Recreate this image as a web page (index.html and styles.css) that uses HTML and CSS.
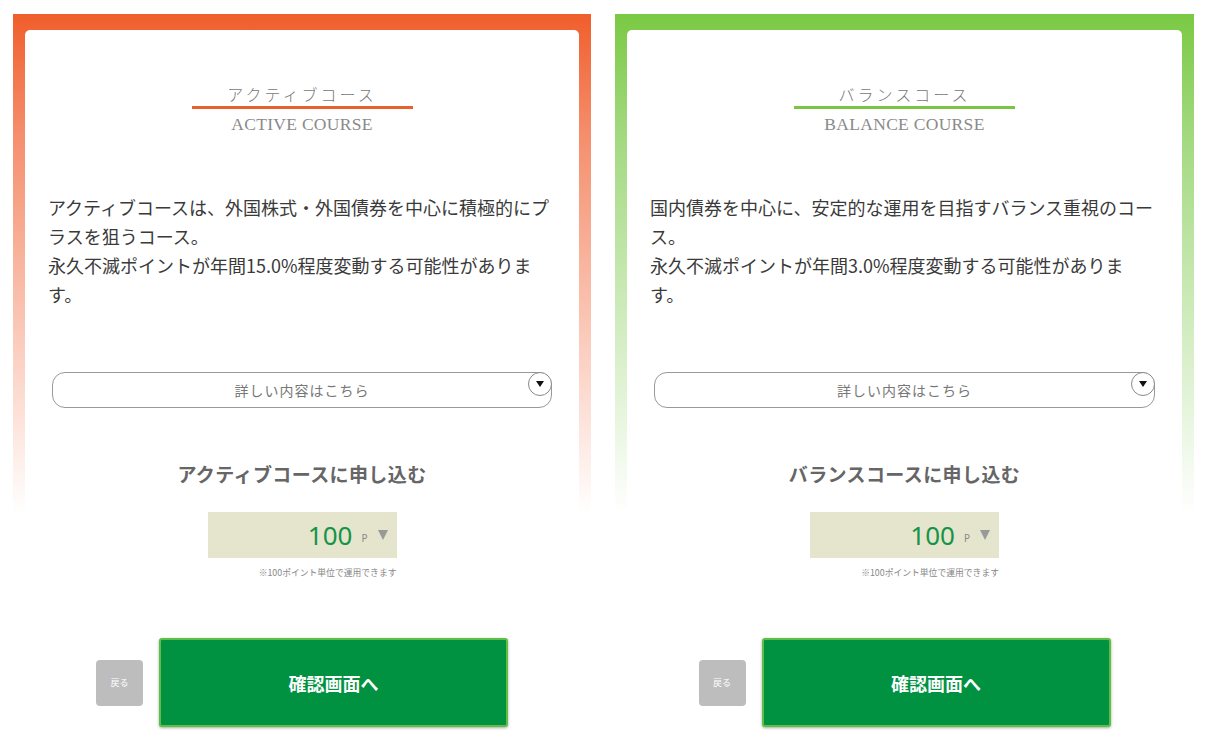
FILE: index.html
```html
<!DOCTYPE html>
<html lang="ja">
<head>
<meta charset="utf-8">
<title>コース選択</title>
<link rel="stylesheet" href="styles.css">
</head>
<body>
<div class="cards">
  <section class="card card-active">
    <div class="panel">
      <div class="title">
        <h2 class="title-ja">アクティブコース</h2>
        <p class="title-en">ACTIVE COURSE</p>
      </div>
      <p class="desc">アクティブコースは、外国株式・外国債券を中心に積極的にプラスを狙うコース。<br>永久不滅ポイントが年間15.0%程度変動する可能性があります。</p>
      <div class="details">詳しい内容はこちら<span class="details-icon"></span></div>
      <h3 class="apply">アクティブコースに申し込む</h3>
      <div class="amount-wrap">
        <div class="amount"><span class="amount-num">100</span><span class="amount-unit">P</span><span class="amount-arrow"></span></div>
        <p class="note">※100ポイント単位で運用できます</p>
      </div>
      <div class="actions">
        <button class="btn-back">戻る</button>
        <button class="btn-confirm">確認画面へ</button>
      </div>
    </div>
  </section>
  <section class="card card-balance">
    <div class="panel">
      <div class="title">
        <h2 class="title-ja">バランスコース</h2>
        <p class="title-en">BALANCE COURSE</p>
      </div>
      <p class="desc">国内債券を中心に、安定的な運用を目指すバランス重視のコース。<br>永久不滅ポイントが年間3.0%程度変動する可能性がありま<br>す。</p>
      <div class="details">詳しい内容はこちら<span class="details-icon"></span></div>
      <h3 class="apply">バランスコースに申し込む</h3>
      <div class="amount-wrap">
        <div class="amount"><span class="amount-num">100</span><span class="amount-unit">P</span><span class="amount-arrow"></span></div>
        <p class="note">※100ポイント単位で運用できます</p>
      </div>
      <div class="actions">
        <button class="btn-back">戻る</button>
        <button class="btn-confirm">確認画面へ</button>
      </div>
    </div>
  </section>
</div>
</body>
</html>
```
FILE: styles.css
```css
html, body {
  margin: 0;
  padding: 0;
  background: #fff;
  width: 1205px;
  height: 740px;
  overflow: hidden;
  font-family: "Noto Sans CJK JP", "Noto Sans", sans-serif;
}

.cards {
  display: flex;
  gap: 24px;
  padding: 14px 0 0 13px;
}

.card {
  width: 578px;
  height: 740px;
  padding: 16px 12px 0;
  box-sizing: border-box;
}

.card-active {
  background: linear-gradient(to bottom, #F05E2C 0px, #F58E6C 120px, rgba(255,255,255,0) 500px);
}

.card-balance {
  width: 579px;
  background: linear-gradient(to bottom, #7AC943 0px, #A2D97F 120px, rgba(255,255,255,0) 500px);
}

.panel {
  background: #fff;
  height: 100%;
  border-radius: 5px 5px 0 0;
  padding: 54px 23px 0;
  box-sizing: border-box;
  display: flex;
  flex-direction: column;
  align-items: center;
}

.title {
  display: flex;
  flex-direction: column;
  align-items: center;
}

.title-ja {
  margin: 0;
  width: 221px;
  text-align: center;
  font-weight: 300;
  font-size: 16px;
  line-height: 20px;
  letter-spacing: 3px;
  color: #777;
  padding-bottom: 2px;
  border-bottom: 3px solid #E8602C;
}

.card-balance .title-ja {
  border-bottom-color: #7DC443;
}

.title-en {
  margin: 5px 0 0;
  font-family: "Liberation Serif", serif;
  font-size: 17.5px;
  line-height: 20px;
  color: #8a8a8a;
  letter-spacing: 0.3px;
}

.desc {
  align-self: stretch;
  margin: 59px 0 0;
  font-size: 18px;
  line-height: 29px;
  color: #3a3a3a;
}

.details {
  position: relative;
  align-self: stretch;
  margin: 63px 4px 0 4px;
  height: 36px;
  border: 1px solid #999;
  border-radius: 13px;
  box-sizing: border-box;
  display: flex;
  align-items: center;
  justify-content: center;
  font-size: 14px;
  letter-spacing: 1px;
  color: #777;
}

.details-icon {
  position: absolute;
  top: -1px;
  right: -1px;
  width: 24px;
  height: 24px;
  border: 1px solid #888;
  border-radius: 50%;
  background: #fff;
  box-sizing: border-box;
}

.details-icon::after {
  content: "";
  position: absolute;
  left: 7px;
  top: 8px;
  border-left: 4px solid transparent;
  border-right: 4px solid transparent;
  border-top: 6px solid #111;
}

.apply {
  margin: 53px 0 0;
  font-size: 19px;
  line-height: 26px;
  letter-spacing: 0.4px;
  font-weight: 700;
  color: #666;
}

.amount-wrap {
  margin-top: 25px;
  display: flex;
  flex-direction: column;
  align-items: flex-end;
}

.amount {
  width: 189px;
  height: 46px;
  background: #E5E5CD;
  display: flex;
  align-items: center;
  justify-content: flex-end;
  padding-right: 9px;
  box-sizing: border-box;
}

.amount-num {
  font-family: "Noto Sans", sans-serif;
  font-size: 26px;
  color: #159447;
  line-height: 1;
}

.amount-unit {
  font-family: "Noto Sans", sans-serif;
  font-size: 10px;
  color: #888;
  margin: 6px 0 0 9px;
}

.amount-arrow {
  margin-left: 10px;
  border-left: 5px solid transparent;
  border-right: 5px solid transparent;
  border-top: 10px solid #999;
}

.note {
  margin: 9px 0 0;
  font-size: 8.8px;
  line-height: 12px;
  color: #888;
}

.actions {
  margin-top: 59px;
  display: flex;
  align-items: center;
  gap: 16px;
}

.btn-back {
  width: 47px;
  height: 46px;
  border: none;
  border-radius: 4px;
  background: #BDBDBD;
  color: #fff;
  font-family: "Noto Sans CJK JP", sans-serif;
  font-size: 9px;
  padding: 0;
}

.btn-confirm {
  width: 349px;
  height: 89px;
  border: 2px solid #5FBE46;
  border-radius: 3px;
  background: #009241;
  color: #fff;
  font-family: "Noto Sans CJK JP", sans-serif;
  font-size: 18px;
  font-weight: 700;
  box-shadow: 0 1px 3px rgba(0,0,0,0.35);
  padding: 0;
}
```
